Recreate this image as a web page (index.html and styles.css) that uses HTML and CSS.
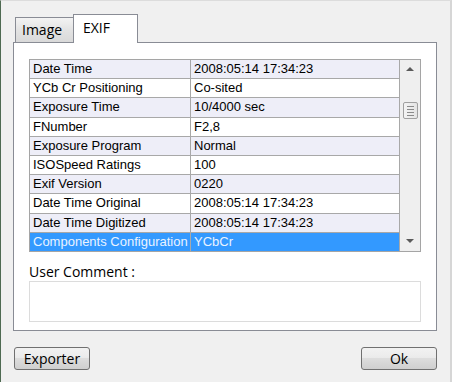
FILE: index.html
```html
<!DOCTYPE html>
<html lang="fr">
<head>
    <meta charset="UTF-8" />
    <title>Propriétés</title>
    <link rel="stylesheet" href="styles.css">
</head>
<body>
    <div class="dialog">
        <div class="tabs">
            <div class="tab">Image</div>
            <div class="tab active">EXIF</div>
        </div>

        <div class="panel">
            <div class="grid-box">
                <table class="exif">
                    <tr class="alt"><td class="key">Date Time</td><td>2008:05:14 17:34:23</td></tr>
                    <tr><td class="key">YCb Cr Positioning</td><td>Co-sited</td></tr>
                    <tr class="alt"><td class="key">Exposure Time</td><td>10/4000 sec</td></tr>
                    <tr><td class="key">FNumber</td><td>F2,8</td></tr>
                    <tr class="alt"><td class="key">Exposure Program</td><td>Normal</td></tr>
                    <tr><td class="key">ISOSpeed Ratings</td><td>100</td></tr>
                    <tr class="alt"><td class="key">Exif Version</td><td>0220</td></tr>
                    <tr><td class="key">Date Time Original</td><td>2008:05:14 17:34:23</td></tr>
                    <tr class="alt"><td class="key">Date Time Digitized</td><td>2008:05:14 17:34:23</td></tr>
                    <tr class="selected"><td class="key">Components Configuration</td><td>YCbCr</td></tr>
                </table>

                <!-- vertical scrollbar -->
                <div class="scrollbar">
                    <div class="arrow up"></div>
                    <div class="thumb">
                        <span></span><span></span><span></span><span></span>
                    </div>
                    <div class="arrow down"></div>
                </div>
            </div>

            <label class="comment-label" for="comment">User Comment :</label>
            <div class="comment" id="comment"></div>
        </div>

        <div class="buttons">
            <button class="button">Exporter</button>
            <button class="button">Ok</button>
        </div>
    </div>
</body>
</html>
```

FILE: styles.css
```css
html, body {
    margin: 0;
    height: 100%;
}

body {
    background-color: #f0f0f0;
    font-family: "Open Sans", "Noto Sans", sans-serif;
    font-size: 12px;
    color: #000;
}

.dialog {
    height: 382px;
    box-sizing: border-box;
    border-left: 1px solid #4f6a52;
    border-top: 1px solid #dcdcdc;
    border-right: 2px solid #d6d6d6;
    padding: 13px 13px 0 12px;
}

/* tab strip */
.tabs {
    display: flex;
    align-items: flex-end;
    height: 28px;
    padding-left: 2px;
}

.tab {
    width: 59px;
    height: 25px;
    box-sizing: border-box;
    padding: 1px 0 0 6px;
    border: 1px solid #898c95;
    border-bottom: none;
    background: linear-gradient(#f3f3f3, #e3e3e3 50%, #d9d9d9);
    font-size: 14px;
    line-height: 22px;
}

.tab.active {
    height: 29px;
    width: 65px;
    margin-bottom: -1px;
    margin-left: -1px;
    padding: 2px 0 0 9px;
    background: #ffffff;
}

.panel {
    width: 424px;
    height: 289px;
    box-sizing: border-box;
    background: #ffffff;
    border: 1px solid #898c95;
    padding: 16px 15px 0 15px;
}

/* the exif grid */
.grid-box {
    display: flex;
    width: 392px;
    height: 193px;
    box-sizing: border-box;
    border: 1px solid #a5a5a5;
}

.exif {
    border-collapse: collapse;
    width: 370px;
    font-family: "Liberation Sans", Arial, sans-serif;
    font-size: 13px;
    table-layout: fixed;
}

.exif td {
    height: 18px;
    padding: 0 0 0 3px;
    border-right: 1px solid #a8a8a8;
    border-bottom: 1px solid #a8a8a8;
    white-space: nowrap;
    overflow: hidden;
    line-height: 18px;
}

.exif td.key {
    width: 157px;
}

.exif tr.alt {
    background-color: #eeeef8;
}

.exif tr.selected {
    background-color: #3399ff;
    color: #eaf3ff;
}

.exif tr.selected td {
    border-bottom: none;
}

.scrollbar {
    flex: 1;
    background: #efefef;
    display: flex;
    flex-direction: column;
    align-items: center;
}

.arrow {
    width: 0;
    height: 0;
    border-left: 4px solid transparent;
    border-right: 4px solid transparent;
}

.arrow.up {
    margin-top: 7px;
    border-bottom: 4px solid #5a5a5a;
}

.arrow.down {
    margin-top: auto;
    margin-bottom: 8px;
    border-top: 4px solid #5a5a5a;
}

.thumb {
    margin-top: 31px;
    width: 15px;
    height: 17px;
    box-sizing: border-box;
    border: 1px solid #a0a0a0;
    border-radius: 2px;
    background: linear-gradient(90deg, #f4f4f4, #e4e4e4);
    display: flex;
    flex-direction: column;
    justify-content: center;
    align-items: center;
    gap: 2px;
}

.thumb span {
    display: block;
    width: 7px;
    height: 1px;
    background: #8a8a8a;
}

.comment-label {
    display: block;
    margin-top: 11px;
    font-size: 14px;
    line-height: 18px;
}

.comment {
    width: 392px;
    height: 41px;
    box-sizing: border-box;
    border: 1px solid #dcdcdc;
}

/* Exporter and Ok */
.buttons {
    display: flex;
    justify-content: space-between;
    width: 424px;
    margin-top: 16px;
    padding-left: 1px;
    box-sizing: border-box;
}

.button {
    width: 76px;
    height: 23px;
    border: 1px solid #707070;
    border-radius: 3px;
    background: linear-gradient(#f2f2f2, #ebebeb 45%, #dddddd 50%, #cfcfcf);
    font-family: "Open Sans", "Noto Sans", sans-serif;
    font-size: 14px;
    padding: 0;
    line-height: 20px;
}
```
